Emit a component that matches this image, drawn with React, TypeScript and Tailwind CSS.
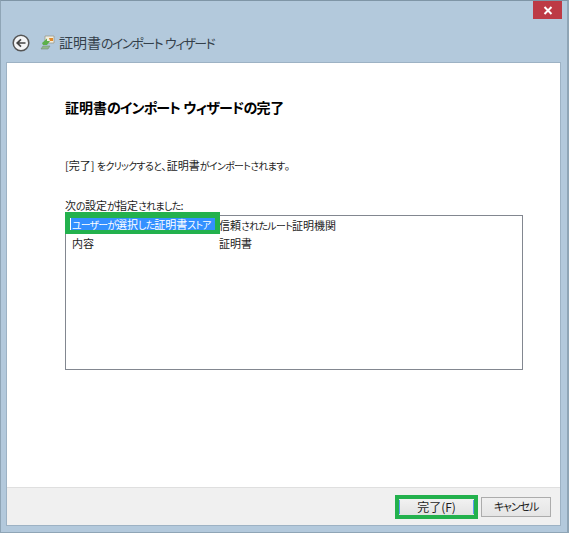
import type { ReactNode } from "react";

function T({ text, kana }: { text: string; kana: string }): ReactNode {
  const parts = text.split(/([\u3040-\u30ff]+)/);
  return (
    <>
      {parts.map((p, i) =>
        i % 2 === 1 ? (
          <span key={i} className={kana}>
            {p}
          </span>
        ) : (
          <span key={i}>{p}</span>
        ),
      )}
    </>
  );
}

const k1 = "text-[0.92em] tracking-[-0.12em]";
const k2 = "tracking-[-0.06em]";
const k3 = "text-[0.9em] tracking-[-0.06em]";
const k4 = "text-[0.9em] tracking-[-0.08em]";

export default function App() {
  const font = { fontFamily: '"Noto Sans CJK JP", sans-serif' };
  return (
    <div style={font} className="w-[569px] h-[533px] bg-[#b3c9dc] border-t border-t-[#7f95a6] border-l border-l-[#8fa5b6] border-r-2 border-r-[#8fa5b6] border-b border-b-[#8fa5b6] flex flex-col overflow-hidden">
      <div className="h-[18px] flex justify-end pr-[5px] shrink-0">
        <div className="w-[29px] h-[18px] bg-[#bd3a45] flex items-center justify-center">
          <svg width="10" height="9" viewBox="0 0 10 9"><path d="M1.5 1 L8.5 8 M8.5 1 L1.5 8" stroke="#fff" strokeWidth="2" /></svg>
        </div>
      </div>
      <div className="h-[43px] flex items-center shrink-0 pl-[11px] pt-[5px]">
        <svg width="18" height="18" viewBox="0 0 18 18" className="shrink-0">
          <circle cx="9" cy="9" r="7.8" fill="#f4f5f6" stroke="#555" strokeWidth="1.5" />
          <path d="M13.5 9 H5.5 M9 5.3 L5.2 9 L9 12.7" fill="none" stroke="#444" strokeWidth="1.7" />
        </svg>
        <svg width="15" height="16" viewBox="0 0 15 16" className="ml-[10px] shrink-0">
          <path d="M5 1 H14 V8 H5 Z" fill="#f3efe0" stroke="#9a9a8a" strokeWidth="0.8" />
          <path d="M9 3 L13 3 L13 6 L10 6 Z" fill="#e08a2a" />
          <path d="M2 8 L7 3.5 L7 6 L10 6 L7 10 L3 10 Z" fill="#5cb04a" />
          <path d="M3 11 H10 L8 14 H1 Z" fill="#8fb98a" stroke="#7a8a7a" strokeWidth="0.6" />
        </svg>
        <span className="ml-[4px] -mt-[2px] text-[14px] leading-none text-[#333f4a] whitespace-nowrap [font-feature-settings:'palt']">
          <T text="証明書のインポート ウィザード" kana={k1} />
        </span>
      </div>
      <div className="flex-1 ml-[5px] mr-[6px] mb-[6px] border border-[#9db2c4] bg-white flex flex-col">
        <div className="flex-1 flex flex-col pl-[58px] pr-[37px] text-[#1c1c1c]">
          <div className="mt-[34px] text-[14px] leading-[20px] font-bold text-black whitespace-nowrap [font-feature-settings:'palt']">
            <T text="証明書のインポート ウィザードの完了" kana={k2} />
          </div>
          <div className="mt-[40px] text-[11px] leading-[16px] whitespace-nowrap [font-feature-settings:'palt']">
            <T text="[完了] をクリックすると、証明書がインポートされます。" kana={k3} />
          </div>
          <div className="mt-[23px] text-[11px] leading-[16px] whitespace-nowrap [font-feature-settings:'palt']">
            <T text="次の設定が指定されました:" kana={k3} />
          </div>
          <div className="relative h-[155px] border border-[#828790] text-[11px] leading-[16px] [font-feature-settings:'palt'] pt-[1px] mt-[1px]">
            <div className="flex h-[17px] items-center">
              <span className="self-start mt-[1px] ml-[5px] w-[144px] h-[12px] leading-[12px] bg-[#3390ff] text-white pl-[1px] whitespace-nowrap">
                <T text="ユーザーが選択した証明書ストア" kana={k4} />
              </span>
              <span className="ml-[4px] whitespace-nowrap">
                <T text="信頼されたルート証明機関" kana={k3} />
              </span>
            </div>
            <div className="flex h-[17px] items-center">
              <span className="ml-[6px] w-[147px]">内容</span>
              <span className="whitespace-nowrap">証明書</span>
            </div>
            <div className="absolute left-[-1px] top-[-4px] w-[155px] h-[22px] border-t-[6px] border-b-[4px] border-x-[5px] border-[#23b14d]" />
          </div>
        </div>
        <div className="h-[38px] bg-[#f0f0f0] border-t border-t-[#dfdfdf] shrink-0 flex justify-end items-center pr-[9px] gap-[3px] text-[11px] text-[#1c1c1c] [font-feature-settings:'palt']">
          <div className="w-[83px] h-[24px] border-[4px] border-[#23b14d] bg-gradient-to-b from-[#f2f2f2] to-[#e3e3e3] flex items-center justify-center whitespace-nowrap">
            <span className="w-full text-center border-x border-x-[#5b9bf0] text-[12px] leading-[14px]">完了(F)</span>
          </div>
          <div className="w-[70px] h-[20px] border border-[#acacac] bg-gradient-to-b from-[#f0f0f0] to-[#e5e5e5] flex items-center justify-center whitespace-nowrap">
            <T text="キャンセル" kana="tracking-[-0.1em]" />
          </div>
        </div>
      </div>
    </div>
  );
}
